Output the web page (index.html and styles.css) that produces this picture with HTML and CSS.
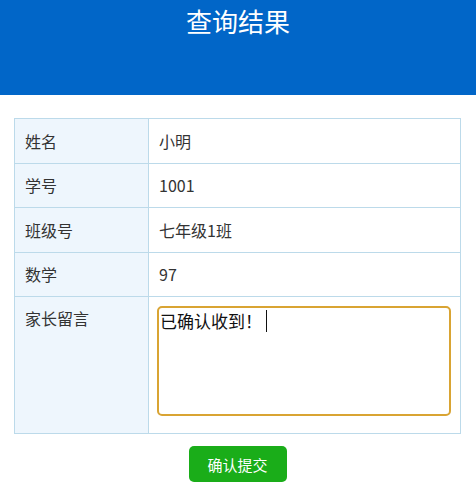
FILE: index.html
```html
<!DOCTYPE html>
<html lang="zh">
<head>
<meta charset="utf-8">
<link rel="stylesheet" href="styles.css">
</head>
<body>
<header class="top-bar">
  <h1 class="title">查询结果</h1>
</header>
<main class="content">
  <table class="info-table">
    <tr><td class="label">姓名</td><td class="value">小明</td></tr>
    <tr><td class="label">学号</td><td class="value">1001</td></tr>
    <tr><td class="label">班级号</td><td class="value">七年级1班</td></tr>
    <tr><td class="label">数学</td><td class="value">97</td></tr>
    <tr class="msg-row"><td class="label label-top">家长留言</td><td class="value value-msg"><div class="msg-box"><span class="msg-text">已确认收到！</span><span class="caret"></span></div></td></tr>
  </table>
  <div class="actions"><button class="submit-btn">确认提交</button></div>
</main>
</body>
</html>
```
FILE: styles.css
```css
* { box-sizing: border-box; }
html, body { margin: 0; padding: 0; background: #fff; }
body { font-family: "Noto Sans CJK SC", "Noto Sans", sans-serif; color: #333; }
.top-bar { background: #0166c8; height: 95px; display: flex; justify-content: center; align-items: flex-start; }
.title { margin: 0; padding-top: 4px; color: #fff; font-size: 26px; font-weight: 400; line-height: 34px; letter-spacing: 0; }
.content { padding: 23px 15px 0 14px; }
.info-table { width: 100%; border-collapse: collapse; font-size: 16px; }
.info-table td { border: 1px solid #bcdaea; height: 44.5px; padding: 0 10px; vertical-align: middle; }
.label { width: 134px; background: #eef6fd; color: #333; }
.value { color: #333; }
.msg-row td { height: 137px; }
.label-top { vertical-align: top !important; padding-top: 9px !important; }
.value-msg { vertical-align: top !important; padding: 9px 9px 15px 8px !important; }
.msg-box { height: 110px; border: 2px solid #d9a433; border-radius: 5px; padding: 1px 1px; font-size: 17px; color: #111; line-height: 24px; display: flex; align-items: flex-start; }
.caret { display: inline-block; width: 1px; height: 22px; background: #111; margin-left: 4px; margin-top: 1px; }
.actions { display: flex; justify-content: center; padding-top: 12px; }
.submit-btn { background: #1aad19; color: #fff; border: none; border-radius: 5px; width: 98px; height: 36px; font-family: inherit; font-size: 15px; padding: 0; }
```
